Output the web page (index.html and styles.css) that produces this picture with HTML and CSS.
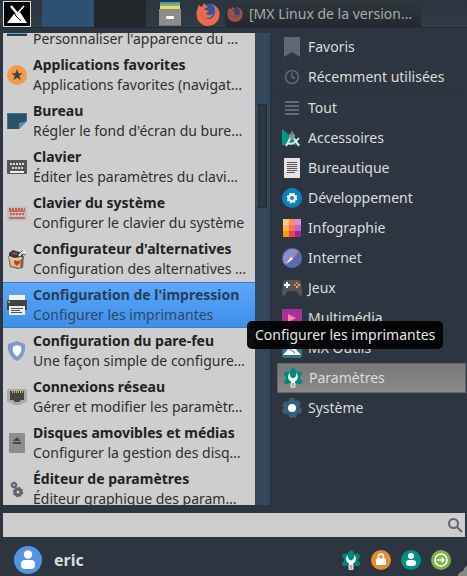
FILE: index.html
```
<!DOCTYPE html>
<html lang="fr">
<head>
    <meta charset="UTF-8">
    <meta name="viewport" content="width=device-width, initial-scale=1.0">
    <title>Menu des applications</title>
    <link rel="stylesheet" href="styles.css">
</head>
<body>
    <!-- icônes utilisées plusieurs fois -->
    <svg class="defs" aria-hidden="true">
        <symbol id="wrench" viewBox="0 0 20 20">
            <g fill="#00897b"><circle cx="10" cy="9.500" r="7"/><circle cx="10" cy="2.800" r="2.600"/><circle cx="3.700" cy="6" r="2.600"/><circle cx="16.300" cy="6" r="2.600"/><circle cx="3.700" cy="13.500" r="2.600"/><circle cx="16.300" cy="13.500" r="2.600"/></g>
            <path fill="#fff" d="M6.500 5C4 8 5 12 8 13.500V15h4v-1.500c3-1.500 4-5.500 1.500-8.500L12.500 9 10 10.500 7.500 9z"/>
            <rect x="7.500" y="14.500" width="5" height="5.500" rx="1" fill="#ddd"/><path stroke="#777" d="M10 15v4"/>
        </symbol>
        <symbol id="firefox" viewBox="0 0 24 24">
            <path fill="#ec6b4d" d="M3 3l3 2 2-4 3 3 5-2c5 2 8 6 7.500 11A11.500 11.500 0 0 1 .5 12C.5 8 2 6 3 3z"/>
            <path fill="#3155a4" d="M11 2c6-1 9 4 8 9-1 6-8 8-12 4-2-2-1-5-1-5l3 1 3-2-4-1c0-2 2-2 4-3z"/>
            <path fill="#ec6b4d" d="M6 9l4-1 3 2-3 1c1 3 5 3 7 0-1 6-8 7-11 3z"/>
        </symbol>
    </svg>

    <header class="panel">
        <button class="start" aria-label="Menu"><svg viewBox="0 0 28 26"><rect x=".5" y=".5" width="27" height="25" fill="#000" stroke="#ddd"/><path fill="#fff" d="M4 22l7-9 2 2 4-4 7 11z"/><path stroke="#fff" stroke-width="2.500" d="M8 5l9 11"/><path stroke="#fff" stroke-width="1.500" d="M21 5l-9 10"/><path stroke="#000" d="M12 14l6 6"/></svg></button>
        <div class="pager"><button class="desk active" aria-label="Bureau 1"></button><button class="desk" aria-label="Bureau 2"></button></div>
        <button class="launcher" aria-label="Fichiers"><svg viewBox="0 0 24 24"><path fill="#5695cc" d="M2 0h20v3H2z"/><path fill="#82ba55" d="M2 2h20v3H2z"/><path fill="#eadb68" d="M2 4h20v4H2z"/><path fill="#8c8c8c" d="M1 7h22v17H1z"/><path fill="#6d6d6d" d="M1 23h22v1H1z"/><rect x="8" y="14" width="8" height="3" rx="1" fill="#fff"/></svg></button>
        <button class="launcher" aria-label="Firefox"><svg><use href="#firefox"/></svg></button>
        <button class="task"><svg><use href="#firefox"/></svg><span>[MX Linux de la version…</span></button>
    </header>

    <main class="menu">
        <div class="content">
            <div class="apps">
                <button class="app first"><svg viewBox="0 0 20 20"><path fill="#333c43" d="M0 2h20v15H0z"/><path fill="#58a9d2" d="M0 2h20v13H0z"/></svg><span><b>Apparence</b>Personnaliser l'apparence du …</span></button>
                <button class="app"><svg viewBox="0 0 20 20"><circle cx="10" cy="10" r="10" fill="#f29b4b"/><path fill="#424242" d="M10 4l1.500 4.200h4.200l-3.400 2.600 1.300 4.400L10 12.600l-3.600 2.600 1.300-4.400L4.300 8.200h4.200z"/></svg><span><b>Applications favorites</b>Applications favorites (navigat…</span></button>
                <button class="app"><svg viewBox="0 0 20 20"><path fill="#2c5268" d="M0 2h20v8l-8 8H0z"/><path fill="#5d8ba8" d="M12 18v-6l8-2z"/><path fill="none" stroke="#45718a" d="M.5 18V2.500h19V10"/></svg><span><b>Bureau</b>Régler le fond d'écran du bure…</span></button>
                <button class="app"><svg viewBox="0 0 20 20"><rect y="3" width="20" height="14" rx="1" fill="#555"/><path stroke="#ddd" stroke-width="2" stroke-dasharray="2 1" d="M3 7h14M5 11h11"/><path stroke="#eee" stroke-width="2" d="M3 15h14"/></svg><span><b>Clavier</b>Éditer les paramètres du clavi…</span></button>
                <button class="app"><svg viewBox="0 0 20 20"><rect y="3" width="20" height="15" rx="1" fill="#c3bfbf"/><path stroke="#c8544f" stroke-width="2" stroke-dasharray="2 1" d="M2 6h16M3 11h15"/><path stroke="#c8544f" stroke-width="2" d="M2 15h16M2 8h16" stroke-opacity=".8"/></svg><span><b>Clavier du système</b>Configurer le clavier du système</span></button>
                <button class="app"><svg viewBox="0 0 20 20"><path fill="#756749" d="M1 7h16l-1 12-5 1-8-2z"/><path fill="#d5bd8c" d="M2 8l12-1-1 12-9-2z"/><path fill="#303c3b" d="M2 4l4-3 9 3 1 4-8 2-6-3z"/><path stroke="#e9eeee" stroke-width="2" d="M12 7l5-6M14 4l5-1"/><path stroke="#376977" d="M11 6l5-5M14 5l5 1"/><path stroke="#b83d60" stroke-width="2" d="M5 4l5 1"/><path fill="#e3d2a6" d="M2 7l5 2 8-1v2l-9 1-4-2z"/><path fill="#d8302d" d="M7 12c2-2 3 0 3 1 1-2 3-2 3 0s-2 2-3 4c-2-1-3-3-3-5z"/></svg><span><b>Configurateur d'alternatives</b>Configuration des alternatives …</span></button>
                <button class="app selected"><svg viewBox="0 0 20 20"><path fill="#f2f2f2" d="M2 0h16v7H2z"/><path fill="#424242" d="M1 5h18l1 1v9H0V6z"/><path fill="#76c442" d="M1 6h2v2H1z"/><path fill="#eee" d="M2 11h16v9H2z"/><path stroke="#555" d="M4 13.500h12M4 15.500h9M4 17.500h11"/></svg><span><b>Configuration de l'impression</b>Configurer les imprimantes</span></button>
                <button class="app"><svg viewBox="0 0 20 20"><path fill="#8296d2" d="M10 0l8 3c1 8-2 14-8 17C4 17 0 11 1 3z"/><path fill="#fff" d="M10 4l4 1.500c1 5-1 8-4 10-3-2-5-5-4-10z"/></svg><span><b>Configuration du pare-feu</b>Une façon simple de configure…</span></button>
                <button class="app"><svg viewBox="0 0 20 20"><path fill="#aaa" d="M1 2h18l1 1v12l-4 1-3 2H7l-3-2-4-1V3z"/><path fill="#454545" d="M3 4h14v9h-3l-2 2H8l-2-2H3z"/><path stroke="#d7b650" stroke-width="2" stroke-dasharray="1 1" d="M5 5h11"/></svg><span><b>Connexions réseau</b>Gérer et modifier les paramètr…</span></button>
                <button class="app"><svg viewBox="0 0 20 20"><rect x="2" width="16" height="20" rx="1" fill="#8e8e8e"/><path fill="#4b4b4b" d="M6 8l4-4 4 4zM6 9h8v2H6z"/></svg><span><b>Disques amovibles et médias</b>Configurer la gestion des disq…</span></button>
                <button class="app"><svg viewBox="0 0 20 20"><g fill="none" stroke="#60646a"><circle cx="7" cy="6" r="2" stroke-width="2"/><circle cx="7" cy="6" r="3" stroke-dasharray="1 1"/><circle cx="11" cy="13" r="3" stroke-width="3"/><circle cx="11" cy="13" r="4.500" stroke-width="1.500" stroke-dasharray="2 1.500"/></g></svg><span><b>Éditeur de paramètres</b>Éditeur graphique des param…</span></button>
            </div>
            <div class="scrollbar"><div class="thumb"></div></div>
            <nav class="categories">
                <button class="category"><svg viewBox="0 0 20 20"><path fill="#626873" d="M2 0h16v20l-8-5-8 5z"/></svg>Favoris</button>
                <button class="category"><svg viewBox="0 0 20 20"><g fill="none" stroke="#626873" stroke-width="1.500"><circle cx="10" cy="10" r="6.500"/><path d="M10 5.500V10l3 1.500"/></g></svg>Récemment utilisées</button>
                <hr>
                <button class="category"><svg viewBox="0 0 20 20"><path stroke="#626873" stroke-width="2" d="M3 4h14M3 8h14M3 12h14M3 16h14"/></svg>Tout</button>
                <button class="category"><svg viewBox="0 0 20 20"><path fill="#009688" d="M0 1l19 16H0z"/><path fill="none" stroke="#e7e7e7" stroke-width="2" d="M9 9l-5 9M11 9l6 9M5 15c5 2 8 0 12-5"/><circle cx="10" cy="8" r="3" fill="#8e8e8e"/><path stroke="#777" stroke-width="2" d="M10 3v4"/></svg>Accessoires</button>
                <button class="category"><svg viewBox="0 0 20 20"><rect x="2" width="16" height="20" rx="1" fill="#e4e4e4"/><path stroke="#555" d="M5 4.500h10M5 6.500h10M5 8.500h10M5 10.500h10M5 12.500h10M5 14.500h8"/></svg>Bureautique</button>
                <button class="category"><svg viewBox="0 0 20 20"><circle cx="10" cy="10" r="10" fill="#0b83bd"/><circle cx="10" cy="10" r="3.200" fill="none" stroke="#fff" stroke-width="2.400"/><circle cx="10" cy="10" r="4.700" fill="none" stroke="#fff" stroke-width="1.200" stroke-dasharray="2 1.700"/></svg>Développement</button>
                <button class="category"><svg viewBox="0 0 20 20"><path fill="#ffcc80" d="M1 1h6v6H1z"/><path fill="#ff8a65" d="M7 1h6v6H7z"/><path fill="#ce93d8" d="M13 1h6v6h-6z"/><path fill="#ffb74d" d="M1 7h6v6H1z"/><path fill="#ff7058" d="M7 7h6v6H7z"/><path fill="#ba68c8" d="M13 7h6v6h-6z"/><path fill="#ff9800" d="M1 13h6v6H1z"/><path fill="#f4433c" d="M7 13h6v6H7z"/><path fill="#9c27a0" d="M13 13h6v6h-6z"/></svg>Infographie</button>
                <button class="category"><svg viewBox="0 0 20 20"><circle cx="10" cy="10" r="10" fill="#5c6bb0"/><path fill="#8690cb" d="M3 17A10 10 0 0 1 17 3z"/><path fill="#ef6a62" d="M16 4l-5 7-2-2z"/><path fill="#fff" d="M4 16l5-7 2 2z"/></svg>Internet</button>
                <button class="category"><svg viewBox="0 0 20 20"><path fill="#555" d="M3 2h14l2 2 1 13-2 1-4-5H6l-4 5-2-1L1 4z"/><path stroke="#fff" stroke-width="2" d="M2 7h6M5 4v6"/><circle cx="15" cy="5" r="1.200" fill="#e46b56"/><circle cx="13" cy="7" r="1.200" fill="#d76a50"/><circle cx="17" cy="7" r="1.200" fill="#d3ad4e"/><circle cx="15" cy="9" r="1.200" fill="#d3ad4e"/></svg>Jeux</button>
                <button class="category"><svg viewBox="0 0 20 20"><rect y="1" width="20" height="18" rx="1" fill="#a8329a"/><path fill="#ff80ab" d="M6 6l8 4-8 4z"/></svg>Multimédia</button>
                <button class="category"><svg viewBox="0 0 20 20"><rect width="20" height="20" rx="2" fill="#2d7584"/><path fill="#fff" d="M1 17l5-6 2 2 3-5 8 9z"/><path stroke="#fff" stroke-width="2" d="M5 3l8 10M15 3L7 13"/><path stroke="#2d7584" d="M8 11l5 4"/></svg>MX Outils</button>
                <button class="category current"><svg><use href="#wrench"/></svg>Paramètres</button>
                <button class="category"><svg viewBox="0 0 20 20"><path fill="#33617b" d="M8 0h4l1 3 3-1 3 4-2 3 3 2-1 4-4 .5-.5 4H10l-2 .5-2-4-4 .5-2-4 2-3-2-2 2-4h4z"/><circle cx="10" cy="10" r="4" fill="#fff"/></svg>Système</button>
            </nav>
            <div class="tooltip" role="tooltip">Configurer les imprimantes</div>
        </div>

        <div class="search">
            <input type="text" id="search" aria-label="Rechercher">
            <label for="search"><svg viewBox="0 0 16 16"><circle cx="6.500" cy="6.500" r="4.500" fill="none" stroke="#60646c" stroke-width="2"/><path stroke="#60646c" stroke-width="2" d="M10 10l5 5"/></svg></label>
        </div>

        <footer class="footer">
            <button class="user"><svg viewBox="0 0 28 28"><circle cx="14" cy="14" r="14" fill="#5294e2"/><circle cx="14" cy="8.500" r="4.200" fill="#fff"/><rect x="7" y="14" width="14" height="9" rx="4" fill="#fff"/></svg>eric</button>
            <div class="actions">
                <button aria-label="Paramètres"><svg><use href="#wrench"/></svg></button>
                <button aria-label="Verrouiller"><svg viewBox="0 0 20 20"><circle cx="10" cy="10" r="10" fill="#e68a33"/><rect x="5" y="8.500" width="10" height="6.500" rx="1" fill="#fff"/><path fill="none" stroke="#fff" stroke-width="1.600" d="M7.500 9V6.500a2.500 2.500 0 0 1 5 0V9"/></svg></button>
                <button aria-label="Changer d'utilisateur"><svg viewBox="0 0 20 20"><circle cx="10" cy="10" r="10" fill="#009385"/><circle cx="10" cy="6" r="3" fill="#fff"/><rect x="5" y="10" width="10" height="6" rx="3" fill="#fff"/></svg></button>
                <button aria-label="Déconnexion"><svg viewBox="0 0 20 20"><circle cx="10" cy="10" r="10" fill="#7cb342"/><circle cx="10" cy="10" r="6" fill="none" stroke="#fff" stroke-width="1.600"/><path fill="none" stroke="#fff" stroke-width="1.500" d="M6 10h7M10.500 7.500L13 10l-2.500 2.500"/></svg></button>
            </div>
            <div class="grip"></div>
        </footer>
    </main>
</body>
</html>
```
FILE: styles.css
```
* {
    box-sizing: border-box;
}
body {
    margin: 0;
    height: 100vh;
    display: flex;
    flex-direction: column;
    background-color: #2d3640;
    color: #dcdcdc;
    font: 14px/20px "Noto Sans", sans-serif;
}
button {
    padding: 0;
    border: none;
    background: none;
    color: inherit;
    font: inherit;
    text-align: left;
}
svg {
    display: block;
    flex: none;
    width: 20px;
    height: 20px;
}
.defs {
    position: absolute;
    width: 0;
    height: 0;
}
/* barre du haut */
.panel {
    display: flex;
    height: 28px;
    padding-left: 3px;
    background: linear-gradient(#2b353f, #303b45);
    border-bottom: 1px solid #222a31;
}
.start svg {
    width: 28px;
    height: 26px;
}
.pager {
    display: flex;
    margin: 0 12px 0 11px;
}
.desk {
    width: 52px;
    background-color: #22272b;
}
.desk.active {
    background-color: #2d5073;
}
.launcher {
    width: 24px;
    margin-right: 14px;
}
.launcher svg {
    width: 24px;
    height: 24px;
}
.task {
    display: flex;
    align-items: center;
    gap: 6px;
    width: 196px;
    margin-left: -9px;
    background: linear-gradient(#30383f, #22282d);
    color: #aaa;
}
.task svg {
    width: 16px;
    height: 16px;
    margin-left: 2px;
    opacity: 0.6;
}
/* menu */
.menu {
    flex: 1;
    min-height: 0;
    display: flex;
    flex-direction: column;
    padding: 5px 1px 0 3px;
}
.content {
    position: relative;
    flex: 1;
    min-height: 0;
    display: flex;
}
.apps {
    flex: 4;
    min-width: 0;
    overflow: hidden;
    background-color: #cecece;
    color: #2e2e2e;
}
.app {
    display: flex;
    align-items: center;
    gap: 6px;
    width: 100%;
    height: 46px;
    padding: 0 4px;
    white-space: nowrap;
}
.app.first {
    margin-top: -27px;
}
.app b {
    display: block;
    color: #222;
}
.app.selected {
    background: linear-gradient(#5ba7fb, #3f8fe8);
    border-top: 1px solid #347fd0;
    border-bottom: 1px solid #347fd0;
    color: #2f4862;
}
.app.selected b {
    color: #263f58;
}
.scrollbar {
    width: 16px;
    padding: 0 3px;
    background-color: #33485a;
    border-right: 1px solid #253039;
}
.thumb {
    height: 22%;
    margin-top: 71px;
    background-color: #2c3742;
    border: 1px solid #202b34;
}
.categories {
    flex: 3;
    min-width: 0;
    margin-top: -1px;
    margin-left: 6px;
}
.category {
    display: flex;
    align-items: center;
    gap: 6px;
    width: 100%;
    height: 30px;
    padding: 0 5px;
    white-space: nowrap;
}
.category.current {
    background: linear-gradient(#777, #898989);
    border: 1px solid #666;
}
hr {
    height: 1px;
    margin: 0;
    border: none;
    background-color: #28313a;
}
.tooltip {
    position: absolute;
    top: 288px;
    left: 244px;
    padding: 4px 8px;
    border-radius: 5px;
    background-color: rgba(0, 0, 0, 0.93);
    color: #e4e4e4;
}
.search {
    display: flex;
    align-items: center;
    height: 24px;
    margin-top: 8px;
    margin-right: 1px;
    padding-right: 2px;
    background-color: #cecece;
}
.search input {
    flex: 1;
    border: none;
    outline: none;
    background: none;
    font: inherit;
}
.search svg {
    width: 16px;
    height: 16px;
}
.footer {
    position: relative;
    display: flex;
    justify-content: space-between;
    align-items: center;
    height: 39px;
    padding: 6px 15px 0 11px;
}
.user {
    display: flex;
    align-items: center;
    gap: 12px;
    font-size: 16px;
    font-weight: bold;
}
.user svg {
    width: 28px;
    height: 28px;
}
.actions {
    display: flex;
    gap: 10px;
}
.grip {
    position: absolute;
    right: -1px;
    bottom: 0;
    width: 10px;
    height: 10px;
    background: linear-gradient(135deg, transparent 50%, #888 50%);
}
```
